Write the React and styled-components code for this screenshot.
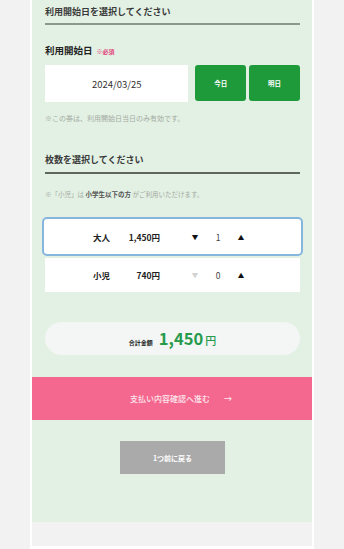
import React from 'react'
import styled, { createGlobalStyle } from 'styled-components'

const Global = createGlobalStyle`
  html, body {
    margin: 0;
    padding: 0;
    background: #f2f2f2;
    font-family: "Noto Sans CJK JP", "Noto Sans", sans-serif;
    color: #333;
  }
`

const Frame = styled.div`
  width: 280px;
  margin: 0 auto;
  padding: 0 2px 3px;
  background: #fff;
`

const Panel = styled.div`
  height: 522px;
  background: #e3f1e4;
  padding: 5px 12px 0 13px;
  box-sizing: border-box;
  display: flex;
  flex-direction: column;
`

const Bottom = styled.div`
  height: 24px;
  background: #f2f2f2;
`

const SectionTitle = styled.h2`
  margin: ${p => p.$top || 0}px 0 0;
  font-size: 9px;
  line-height: 14px;
  font-weight: 700;
  color: #3a3a3a;
  padding-bottom: ${p => p.$pad || 4}px;
  border-bottom: 2px solid ${p => p.$line || '#8d988d'};
`

const Label = styled.div`
  margin-top: 18px;
  display: flex;
  align-items: baseline;
  gap: 4px;
  font-size: 9.5px;
  line-height: 14px;
  font-weight: 700;
  color: #222;
`

const Required = styled.span`
  font-size: 6px;
  color: #e2457d;
  font-weight: 700;
`

const DateRow = styled.div`
  margin-top: 6px;
  display: flex;
  height: 37px;
`

const DateBox = styled.div`
  width: 144px;
  background: #fff;
  display: flex;
  align-items: center;
  justify-content: center;
  font-size: 9.5px;
  color: #333;
`

const DayButton = styled.button`
  width: 51px;
  height: 36px;
  margin-left: ${p => p.$gap}px;
  border: none;
  border-radius: 3px;
  background: #1f9a3b;
  color: #fff;
  font-family: inherit;
  font-size: 6.5px;
  font-weight: 700;
  padding: 0;
`

const Note = styled.p`
  margin: ${p => p.$top}px 0 0;
  font-size: ${p => p.$size || 7}px;
  line-height: 10px;
  color: #a3aaa3;
  white-space: nowrap;

  b {
    color: #555;
    font-weight: 700;
  }
`

const Ticket = styled.div`
  display: grid;
  grid-template-columns: 65px 50px 25px 20px 26px 20px;
  align-items: center;
  background: #fff;
  box-sizing: border-box;
  font-size: 8.5px;
  color: #222;
  height: ${p => (p.$focus ? 39 : 34)}px;
  margin: ${p => (p.$focus ? '18px -3px 0' : '2px 0 0')};
  padding-left: ${p => (p.$focus ? 1 : 0)}px;
  border: ${p => (p.$focus ? '2px solid #86b6de' : 'none')};
  border-radius: ${p => (p.$focus ? 5 : 0)}px;
`

const Name = styled.span`
  text-align: right;
  font-weight: 700;
`

const Price = styled.span`
  text-align: right;
  font-weight: 700;
`

const Arrow = styled.span`
  grid-column: ${p => p.$col};
  text-align: center;
  font-size: 6.5px;
  color: ${p => (p.$off ? '#d2d2d2' : '#111')};
`

const Count = styled.span`
  text-align: center;
  font-size: 8.5px;
  color: #444;
`

const Total = styled.div`
  margin-top: 30px;
  height: 33px;
  border-radius: 17px;
  background: #f3f6f5;
  display: flex;
  align-items: baseline;
  justify-content: center;
  padding-top: 6px;
  box-sizing: border-box;
  color: #289a4c;
`

const TotalLabel = styled.span`
  font-size: 6px;
  font-weight: 700;
  color: #222;
  margin-right: 6px;
`

const TotalValue = styled.span`
  font-size: 16.5px;
  font-weight: 700;
  line-height: 20px;
`

const Yen = styled.span`
  font-size: 11px;
  margin-left: 2px;
  font-weight: 500;
`

const NextButton = styled.button`
  margin: 22px -12px 0 -13px;
  height: 43px;
  border: none;
  background: #f4688f;
  color: #fde7ee;
  font-family: inherit;
  font-size: 8px;
  font-weight: 500;
  display: flex;
  align-items: center;
  justify-content: center;
  gap: 14px;
  padding: 0 0 0 18px;
`

const BackButton = styled.button`
  margin: 21px auto 0;
  width: 105px;
  height: 33px;
  border: none;
  background: #aaaaaa;
  color: #fff;
  font-family: inherit;
  font-size: 7px;
  font-weight: 700;
  padding: 0;
`

const tickets = [
  { name: '大人', price: '1,450円', count: 1, focus: true },
  { name: '小児', price: '740円', count: 0 },
]

export default function App() {
  return (
    <>
      <Global />
      <Frame>
        <Panel>
          <SectionTitle>利用開始日を選択してください</SectionTitle>
          <Label>
            利用開始日<Required>※必須</Required>
          </Label>
          <DateRow>
            <DateBox>2024/03/25</DateBox>
            <DayButton $gap={7}>今日</DayButton>
            <DayButton $gap={3}>明日</DayButton>
          </DateRow>
          <Note $top={11}>※この券は、利用開始日当日のみ有効です。</Note>

          <SectionTitle $top={30} $pad={5} $line="#5f665f">枚数を選択してください</SectionTitle>
          <Note $top={15} $size={6.5}>
            ※「小児」は <b>小学生以下の方</b> がご利用いただけます。
          </Note>

          {tickets.map(t => (
            <Ticket key={t.name} $focus={t.focus}>
              <Name>{t.name}</Name>
              <Price>{t.price}</Price>
              <Arrow $col={4} $off={t.count === 0}>▼</Arrow>
              <Count>{t.count}</Count>
              <Arrow $col={6}>▲</Arrow>
            </Ticket>
          ))}

          <Total>
            <TotalLabel>合計金額</TotalLabel>
            <TotalValue>1,450</TotalValue>
            <Yen>円</Yen>
          </Total>

          <NextButton>
            支払い内容確認へ進む <span>→</span>
          </NextButton>
          <BackButton>1つ前に戻る</BackButton>
        </Panel>
        <Bottom />
      </Frame>
    </>
  )
}
